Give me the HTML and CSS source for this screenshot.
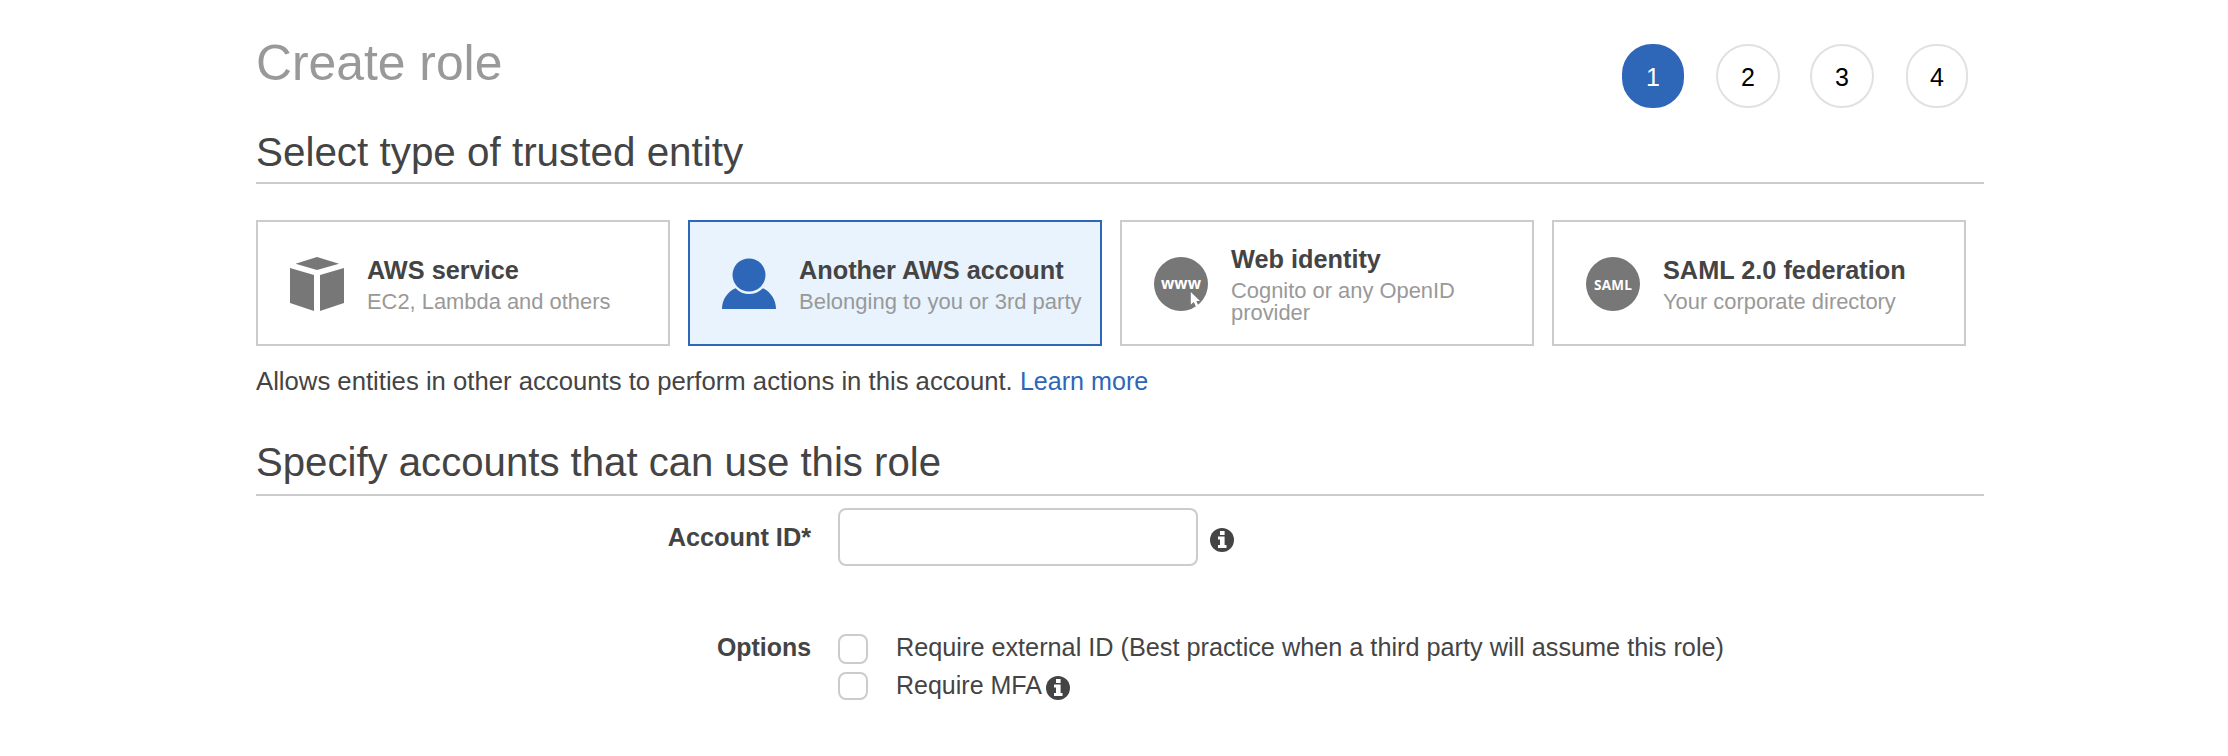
FILE: index.html
```html
<!DOCTYPE html>
<html lang="en">
<head>
<meta charset="utf-8">
<title>Create role</title>
<link rel="stylesheet" href="styles.css">
</head>
<body>
<main class="page">
  <header class="head">
    <h1 class="title">Create role</h1>
    <ol class="steps">
      <li class="step step-active">1</li>
      <li class="step step-wide">2</li>
      <li class="step step-wide step-third">3</li>
      <li class="step">4</li>
    </ol>
  </header>

  <h2 class="section">Select type of trusted entity</h2>
  <div class="cards">
    <div class="card">
      <svg class="card-icon" viewBox="0 0 54 54" fill="#777"><path d="M27 0 49 6.800 27 13 5.500 6.800Z"/><path d="M0 11 24 18V54L0 46Z"/><path d="M54 11 30 18V54L54 46Z"/></svg>
      <div class="card-text"><div class="card-title">AWS service</div><div class="card-sub">EC2, Lambda and others</div></div>
    </div>
    <div class="card card-selected">
      <svg class="card-icon" viewBox="0 0 54 54" fill="#2e66b8"><circle cx="27" cy="18" r="16.500"/><path d="M13.500 31.200C5 35 0 43 0 52H54C54 43 49 35 41 31.200C33 39 21 39 13.500 31.200Z"/></svg>
      <div class="card-text"><div class="card-title">Another AWS account</div><div class="card-sub">Belonging to you or 3rd party</div></div>
    </div>
    <div class="card">
      <svg class="card-icon" viewBox="0 0 54 54"><circle cx="27" cy="27" r="27" fill="#777"/><text class="badge-www" x="27" y="31.500" textLength="40">www</text><path fill="#fff" d="M36.800 35V47.500L39.800 45 42 49.800 44.400 48.700 42.300 44H46Z"/></svg>
      <div class="card-text"><div class="card-title">Web identity</div><div class="card-sub">Cognito or any OpenID provider</div></div>
    </div>
    <div class="card">
      <svg class="card-icon" viewBox="0 0 54 54"><circle cx="27" cy="27" r="27" fill="#777"/><text class="badge-saml" x="27" y="32.500" textLength="38">SAML</text></svg>
      <div class="card-text"><div class="card-title">SAML 2.0 federation</div><div class="card-sub">Your corporate directory</div></div>
    </div>
  </div>
  <p class="note">Allows entities in other accounts to perform actions in this account. <a class="link">Learn more</a></p>

  <h2 class="section section-accounts">Specify accounts that can use this role</h2>
  <div class="row row-account">
    <label class="label" for="account">Account ID*</label>
    <div class="field">
      <input class="input" id="account" type="text">
      <svg class="info" viewBox="0 0 24 24"><circle cx="12" cy="12" r="12" fill="#444"/><path fill="#fff" d="M10 3h4.600v4H10zM8 8.500h6.600v8.500H16.500v3H8v-3h2v-5.500H8z"/></svg>
    </div>
  </div>
  <div class="row row-options">
    <div class="label label-options">Options</div>
    <div class="options">
      <label class="option"><input class="check" type="checkbox"><span>Require external ID (Best practice when a third party will assume this role)</span></label>
      <label class="option"><input class="check check-short" type="checkbox"><span class="mfa">Require MFA</span><svg class="info" viewBox="0 0 24 24"><circle cx="12" cy="12" r="12" fill="#444"/><path fill="#fff" d="M10 3h4.600v4H10zM8 8.500h6.600v8.500H16.500v3H8v-3h2v-5.500H8z"/></svg></label>
    </div>
  </div>
</main>
</body>
</html>
```
FILE: styles.css
```css
* { box-sizing: border-box; }
body {
  margin: 0;
  background: #fff;
  color: #444;
  font-family: "Liberation Sans", Arial, sans-serif;
  font-size: 25.25px;
  line-height: 30px;
}
.page { width: 1728px; margin-left: 256px; padding-top: 33px; }
.head { display: flex; justify-content: space-between; align-items: flex-start; height: 94px; padding-right: 16px; }
.title { margin: 0; font-size: 49.8px; line-height: 60px; font-weight: 400; color: #999; }
.steps { display: flex; gap: 32px; margin: 11px 0 0; padding: 0; list-style: none; }
.step {
  width: 62px;
  height: 64px;
  border: 2px solid #e1e1e1;
  border-radius: 30px;
  color: #000;
  font-size: 25px;
  line-height: 62px;
  text-align: center;
}
.step-wide { width: 64px; margin-right: -2px; border-radius: 32px; }
.step-third { margin-right: 0; }
.step-active { border-color: #2e66b8; background: #2e66b8; color: #fff; }
.section { margin: 0; padding-bottom: 5px; border-bottom: 2px solid #ccc; font-size: 40.4px; line-height: 50px; font-weight: 400; }
.section-accounts { margin-top: 42px; padding-bottom: 6px; font-size: 40.15px; }
.cards { display: flex; gap: 18px; margin-top: 36px; }
.card { display: flex; align-items: center; width: 414px; height: 126px; padding-left: 32px; border: 2px solid #ccc; }
.card-selected { border-color: #2e66b8; background: #e8f3fd; }
.card-icon { flex: none; width: 54px; height: 54px; margin-top: 2px; }
.card-text { padding-left: 23px; white-space: nowrap; }
.card-title { font-size: 25.3px; line-height: 30px; font-weight: 700; }
.card-sub { width: 270px; padding-top: 6px; margin-bottom: -1px; color: #999; font-size: 21.9px; line-height: 22px; white-space: normal; }
.card-selected .card-sub { width: 290px; font-size: 22px; }
.badge-www, .badge-saml { fill: #fff; font-family: "Open Sans", sans-serif; font-weight: 700; text-anchor: middle; }
.badge-www { font-size: 15.5px; }
.badge-saml { font-size: 13.5px; }
.note { margin: 20px 0 0; font-size: 25.7px; }
.link { color: #2e66b8; font-size: 25.1px; }
.row { display: grid; grid-template-columns: 555px 1fr; column-gap: 27px; }
.row-account { margin-top: 12px; }
.label { font-size: 25.3px; font-weight: 700; text-align: right; }
.label-options { font-size: 24.9px; }
.row-account .label { padding-top: 14px; }
.field { display: flex; align-items: center; gap: 12px; }
.input { width: 360px; height: 58px; border: 2px solid #ccc; border-radius: 8px; background: #fff; }
.info { width: 24px; height: 24px; flex: none; margin-top: 6px; }
.row-options { margin-top: 66px; }
.options { display: flex; flex-direction: column; gap: 8px; }
.option { display: flex; height: 30px; align-items: flex-start; }
.check { appearance: none; flex: none; width: 30px; height: 30px; margin: 2px 28px 0 0; border: 2px solid #ccc; border-radius: 8px; background: #fff; }
.check-short { height: 28px; }
.mfa { margin-right: 4px; font-size: 25px; }
```
